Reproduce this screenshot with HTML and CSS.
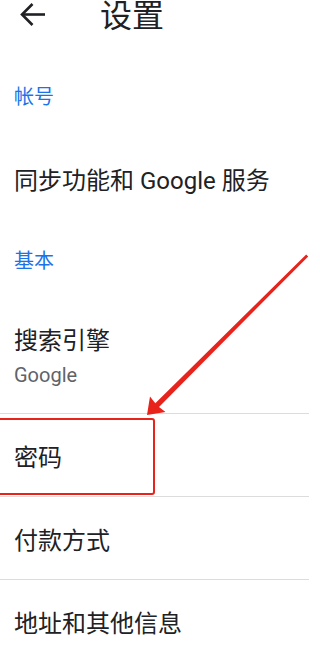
FILE: index.html
```html
<!DOCTYPE html>
<html lang="zh-CN">
<head>
<meta charset="utf-8">
<link rel="stylesheet" href="styles.css">
</head>
<body>
<div class="page">
  <header class="topbar">
    <svg class="back" width="26" height="26" viewBox="0 0 26 26">
      <path d="M3 12.5H26" stroke="#202124" stroke-width="2.6" fill="none"/>
      <path d="M13.5 2L3 12.5L13.5 23" stroke="#202124" stroke-width="2.6" fill="none" stroke-linejoin="miter"/>
    </svg>
    <h1 class="title">设置</h1>
  </header>

  <div class="cat cat-account">帐号</div>
  <div class="item item-sync">同步功能和 Google 服务</div>

  <div class="cat cat-basic">基本</div>
  <div class="item item-search">
    <div class="item-title">搜索引擎</div>
    <div class="item-sub">Google</div>
  </div>
  <div class="item row">密码</div>
  <div class="item row">付款方式</div>
  <div class="item row">地址和其他信息</div>

  <div class="highlight"></div>
  <svg class="pointer" width="309" height="650" viewBox="0 0 309 650">
    <polygon points="147,415 165.5,412 159,407 308.2,256.4 306.2,254.4 155.3,403.3 150,396.5" fill="#e8231c"/>
  </svg>
</div>
</body>
</html>
```

FILE: styles.css
```css
html, body {
  margin: 0;
  padding: 0;
  background: #ffffff;
}
body {
  font-family: Roboto, "Noto Sans CJK SC", "Noto Sans", sans-serif;
  color: #202124;
  overflow: hidden;
}
.page {
  position: relative;
  width: 309px;
  height: 650px;
  overflow: hidden;
}
.topbar {
  display: flex;
  align-items: flex-start;
  height: 32px;
}
.back {
  margin-left: 19px;
  margin-top: 1.5px;
  flex: none;
}
.title {
  margin: 0 0 0 55px;
  font-size: 32px;
  line-height: 32px;
  font-weight: 400;
  color: #202124;
}
.cat {
  padding: 0 14px;
  font-size: 20px;
  line-height: 24px;
  color: #1a73e8;
}
.cat-account {
  padding-top: 53px;
  padding-bottom: 28px;
}
.cat-basic {
  padding-top: 30px;
  padding-bottom: 27px;
}
.item {
  padding: 0 14px;
  font-size: 24px;
  color: #202124;
}
.item-sync {
  height: 82px;
  display: flex;
  align-items: center;
}
.item-search {
  padding-top: 26px;
  padding-bottom: 25px;
  border-bottom: 1px solid #dcdcdc;
}
.item-title {
  line-height: 30px;
}
.item-sub {
  margin-top: 6px;
  font-size: 20px;
  line-height: 26px;
  color: #5f6368;
}
.row {
  height: 82px;
  display: flex;
  align-items: center;
  border-bottom: 1px solid #dcdcdc;
}
.highlight {
  position: absolute;
  left: -10px;
  top: 418px;
  width: 161px;
  height: 73px;
  border: 2.5px solid #e8231c;
  border-radius: 3px;
}
.pointer {
  position: absolute;
  left: 0;
  top: 0;
  pointer-events: none;
}
```
